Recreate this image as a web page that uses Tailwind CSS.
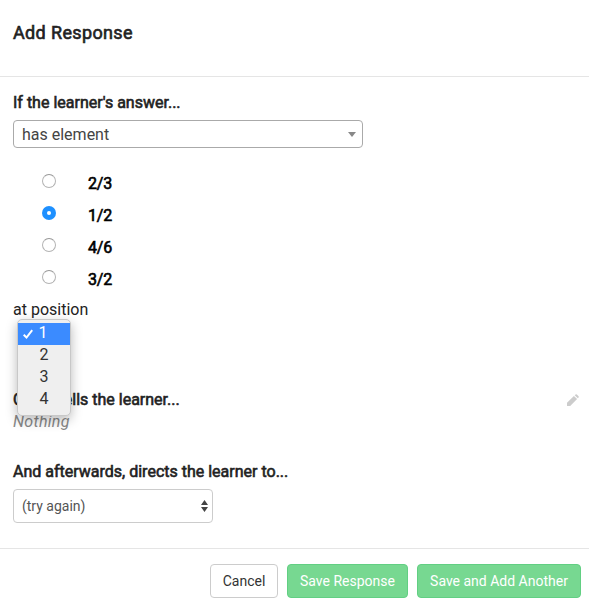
<!DOCTYPE html>
<html lang="en">
<head>
<meta charset="utf-8">
<title>Add Response</title>
<script src="https://cdn.jsdelivr.net/npm/@tailwindcss/browser@4"></script>
</head>
<body class="h-[606px] w-[589px] overflow-hidden bg-white font-[Roboto,sans-serif] text-base text-[#222]">
<form class="flex h-full flex-col">
  <header class="h-[77px] border-b border-[#e5e5e5] px-[13px] pt-[20px]">
    <h3 class="text-[18px] leading-[26px] tracking-[0.36px] [-webkit-text-stroke:0.6px_#222]"><span>Add Response</span></h3>
  </header>
  <main class="relative flex h-[471px] flex-col px-[13px] pt-[15px]">
    <div class="h-[22px] leading-[22px] [-webkit-text-stroke:0.6px_#222]"><span>If the learner's answer...</span></div>
    <div class="mt-[6px] flex h-[28px] w-[350px] items-center justify-between rounded-[4px] border border-[#aaa] pr-[6px] pl-[8px] text-[#444]">
      <span class="pt-[2px]">has element</span>
      <svg class="h-[5px] w-[8px]" viewBox="0 0 8 5" fill="#888"><path d="M0 0h8L4 5z"/></svg>
    </div>
    <div class="mt-[17px] flex flex-col pl-[29px] text-black">
      <label class="flex h-[32px] items-start gap-[32px]"><span class="mt-[9px] h-[14px] w-[14px] rounded-full border border-[#b4b4b4] border-t-[#989898]"></span><span class="mt-[8px] leading-[22px] tracking-[-0.2px] [-webkit-text-stroke:0.6px_#000]">2/3</span></label>
      <label class="flex h-[32px] items-start gap-[32px]"><span class="mt-[9px] flex h-[14px] w-[14px] items-center justify-center rounded-full bg-[#1e90ff]"><span class="h-[4px] w-[4px] rounded-full bg-white"></span></span><span class="mt-[8px] leading-[22px] tracking-[-0.2px] [-webkit-text-stroke:0.6px_#000]">1/2</span></label>
      <label class="flex h-[32px] items-start gap-[32px]"><span class="mt-[9px] h-[14px] w-[14px] rounded-full border border-[#b4b4b4] border-t-[#989898]"></span><span class="mt-[8px] leading-[22px] tracking-[-0.2px] [-webkit-text-stroke:0.6px_#000]">4/6</span></label>
      <label class="flex h-[32px] items-start gap-[32px]"><span class="mt-[9px] h-[14px] w-[14px] rounded-full border border-[#b4b4b4] border-t-[#989898]"></span><span class="mt-[8px] leading-[22px] tracking-[-0.2px] [-webkit-text-stroke:0.6px_#000]">3/2</span></label>
    </div>
    <div class="mt-[6px] h-[22px] leading-[22px]"><span>at position</span></div>
    <div class="mt-[68px] flex h-[22px] items-center justify-between leading-[22px]">
      <span class="[-webkit-text-stroke:0.6px_#222]">Oppia tells the learner...</span>
      <svg class="mr-[-3px] h-[12px] w-[12px]" viewBox="0 0 12 12" fill="#ccc"><path d="M0 8.8 6.9 1.9 10.1 5.1 3.2 12H0zM7.7 1.2 8.6 .4Q9.2 0 9.8 .4L11.6 2.2Q12 2.8 11.6 3.4L10.8 4.3z"/></svg>
    </div>
    <div class="h-[22px] leading-[22px] tracking-[0.3px] text-[#888] italic"><span>Nothing</span></div>
    <div class="mt-[28px] h-[22px] leading-[22px] [-webkit-text-stroke:0.6px_#222]"><span>And afterwards, directs the learner to...</span></div>
    <div class="mt-[6px] flex h-[34px] w-[200px] items-center justify-between rounded-[4px] border border-[#ccc] pr-[4px] pl-[8px] text-[14px] text-[#555]">
      <span>(try again)</span>
      <svg class="h-[12px] w-[7px]" viewBox="0 0 7 12" fill="#444"><path d="M3.5 0 7 5H0zM0 7h7L3.5 12z"/></svg>
    </div>
    <ul class="absolute top-[242px] left-[17px] w-[54px] rounded-[5px] border border-[#c8c8c8] bg-[#efefef] pt-[3px] pb-[4px] text-[#333] shadow-[0_4px_12px_rgba(0,0,0,0.28)]">
      <li class="flex h-[22px] items-center bg-[#3b8bff] pl-[5px] leading-[22px] text-white">
        <svg class="mr-[5.5px] h-[10px] w-[10px]" viewBox="0 0 10 10" fill="none" stroke="white" stroke-width="2"><path d="M.7 5.8 3.5 8.5 9.2 1.2"/></svg><span class="relative top-[-1px]">1</span>
      </li>
      <li class="h-[22px] pl-[21.5px] leading-[20px]">2</li>
      <li class="h-[22px] pl-[21.5px] leading-[20px]">3</li>
      <li class="h-[22px] pl-[21.5px] leading-[20px]">4</li>
    </ul>
  </main>
  <footer class="flex flex-1 justify-end gap-[9px] border-t border-[#e5e5e5] pt-[15px] pr-[8px] text-[14px]">
    <button type="button" class="h-[34px] w-[68px] rounded-[4px] border border-[#ccc] bg-white text-[#333]">Cancel</button>
    <button type="button" class="h-[34px] w-[121px] rounded-[4px] border border-[#62cf83] bg-[#77d891] text-white">Save Response</button>
    <button type="button" class="h-[34px] w-[164px] rounded-[4px] border border-[#62cf83] bg-[#77d891] text-white">Save and Add Another</button>
  </footer>
</form>
</body>
</html>
